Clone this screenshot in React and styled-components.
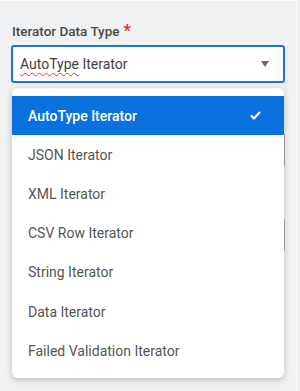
import React from "react";
import styled, { createGlobalStyle } from "styled-components";

const GlobalStyle = createGlobalStyle`
  html, body {
    margin: 0;
    padding: 0;
    background: #f0f1f3;
    font-family: Roboto, "Liberation Sans", sans-serif;
  }
`;

const Panel = styled.div`
  width: 297px;
  height: 390px;
  box-sizing: border-box;
  border-top: 1px solid #fbfbfc;
  border-right: 1px solid #fbfbfc;
  padding: 19px 0 0 12px;
  overflow: hidden;
`;

const Field = styled.div`
  position: relative;
  display: flex;
  flex-direction: column;
  gap: 5px;
  width: 273px;
  margin-bottom: 24px;
`;

const Label = styled.label`
  height: 20px;
  font-size: 13.5px;
  font-weight: 500;
  line-height: 20px;
  color: #4a4a4a;

  & span {
    color: #e3262b;
    font-size: 17px;
    margin-left: 4px;
  }
`;

const SelectBox = styled.div`
  height: 38px;
  box-sizing: border-box;
  border: 2px solid #1d74df;
  border-radius: 3px;
  background: #fff;
  display: flex;
  align-items: center;
  justify-content: space-between;
  padding: 0 14px 0 7px;
  font-size: 14px;
  color: #3f3f3f;
  margin-left: -1px;
`;

const Spell = styled.span`
  text-decoration: underline wavy #e53935;
  text-decoration-thickness: 1px;
  text-underline-offset: 3px;
`;

const Caret = styled.i`
  width: 0;
  height: 0;
  border-left: 4.5px solid transparent;
  border-right: 4.5px solid transparent;
  border-top: 6px solid #6c6c6c;
`;

const Input = styled.div`
  height: 36px;
  box-sizing: border-box;
  border: 1px solid #a9abb0;
  border-radius: 3px;
  background: #fff;
`;

const Menu = styled.ul`
  position: absolute;
  top: 68px;
  left: 0;
  width: 272px;
  margin: 0;
  padding: 8px 0;
  list-style: none;
  background: #fff;
  border-radius: 6px;
  box-shadow: 0 2px 6px rgba(0, 0, 0, 0.22);
  z-index: 2;
`;

const Option = styled.li`
  height: 39.2px;
  display: flex;
  align-items: center;
  justify-content: space-between;
  padding: 0 23px 0 16px;
  font-size: 14px;
  background: ${(p) => (p.selected ? "#0a72df" : "transparent")};
  color: ${(p) => (p.selected ? "#ffffff" : "#555555")};
  font-weight: ${(p) => (p.selected ? 500 : 400)};
`;

const options = [
  "AutoType Iterator",
  "JSON Iterator",
  "XML Iterator",
  "CSV Row Iterator",
  "String Iterator",
  "Data Iterator",
  "Failed Validation Iterator",
];

function Check() {
  return (
    <svg width="11" height="9" viewBox="0 0 11 9">
      <polyline
        points="1.5,5 4,7.5 9.5,1.5"
        fill="none"
        stroke="#fff"
        strokeWidth="2"
        strokeLinecap="round"
        strokeLinejoin="round"
      />
    </svg>
  );
}

export default function App() {
  return (
    <>
      <GlobalStyle />
      <Panel>
        <Field>
          <Label>
            Iterator Data Type<span>*</span>
          </Label>
          <SelectBox>
            <div>
              <Spell>AutoType</Spell> Iterator
            </div>
            <Caret />
          </SelectBox>
          <Menu>
            {options.map((o, i) => (
              <Option key={o} selected={i === 0}>
                {o}
                {i === 0 && <Check />}
              </Option>
            ))}
          </Menu>
        </Field>
        <Field>
          <Label />
          <Input />
        </Field>
        <Field>
          <Label />
          <Input />
        </Field>
      </Panel>
    </>
  );
}
